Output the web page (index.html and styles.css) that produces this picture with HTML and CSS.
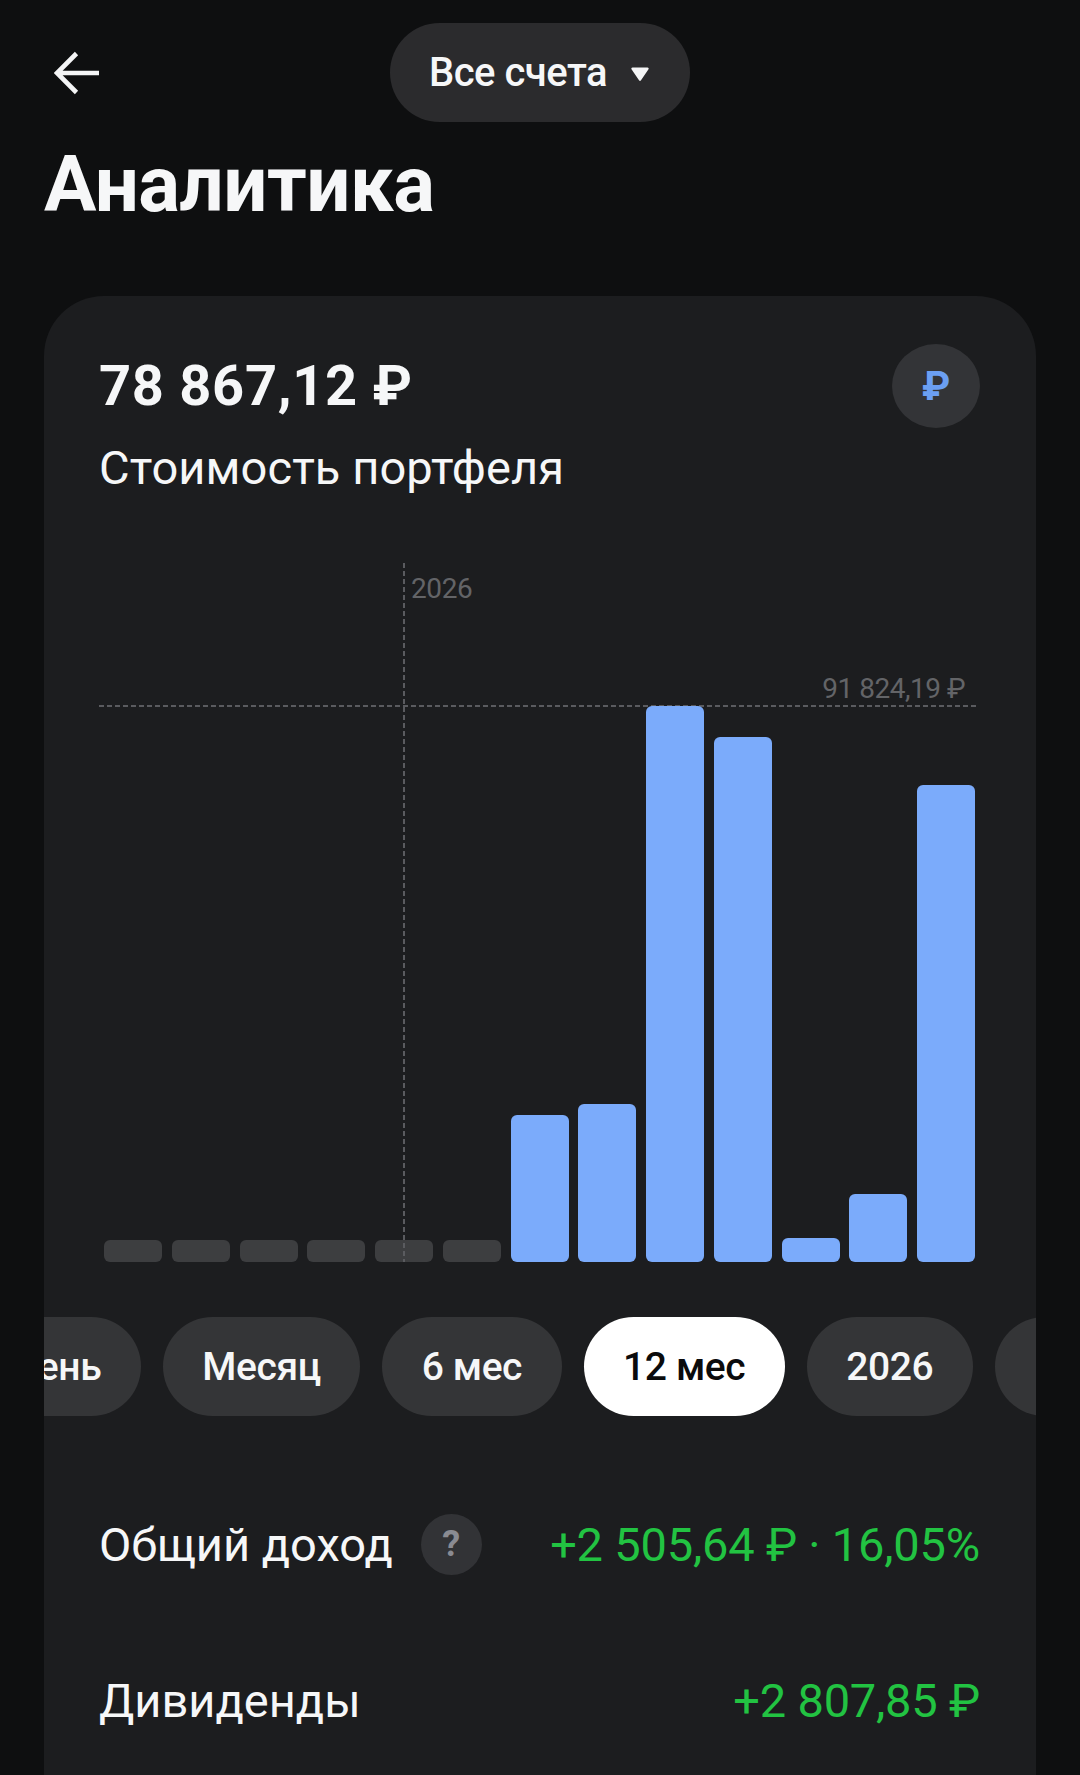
FILE: index.html
```html
<!DOCTYPE html>
<html lang="ru">
<head>
<meta charset="utf-8">
<title>Аналитика</title>
<link rel="stylesheet" href="styles.css">
</head>
<body>
<div class="page">
  <header class="topbar">
    <svg class="back" viewBox="0 0 46 44" width="46" height="44" aria-hidden="true"><path d="M45 22H3M22.500 2.500 3 22l19.500 19.500" fill="none" stroke="#f4f5f6" stroke-width="4.600"/></svg>
    <div class="account"><span>Все счета</span><svg class="caret" viewBox="0 0 20 16" width="20" height="16" aria-hidden="true"><path d="M2.500 1.500h15a1.200 1.200 0 0 1 1 1.800l-7.500 11a1.200 1.200 0 0 1-2 0l-7.500-11a1.200 1.200 0 0 1 1-1.800z" fill="#f4f5f6"/></svg></div>
  </header>
  <h1 class="title">Аналитика</h1>
  <section class="card">
    <div class="summary">
      <div>
        <div class="amount">78 867,12 ₽</div>
        <div class="caption">Стоимость портфеля</div>
      </div>
      <div class="currency">₽</div>
    </div>
    <div class="chart">
      <div class="year-line"></div>
      <div class="year-label">2026</div>
      <div class="max-line"></div>
      <div class="max-label">91 824,19 ₽</div>
      <div class="bars">
        <div class="bar empty"></div>
        <div class="bar empty"></div>
        <div class="bar empty"></div>
        <div class="bar empty"></div>
        <div class="bar empty"></div>
        <div class="bar empty"></div>
        <div class="bar" style="height:147px"></div>
        <div class="bar" style="height:158px"></div>
        <div class="bar" style="height:556px"></div>
        <div class="bar" style="height:525px"></div>
        <div class="bar" style="height:24px"></div>
        <div class="bar" style="height:68px"></div>
        <div class="bar" style="height:477px"></div>
      </div>
    </div>
    <div class="periods">
      <div class="pill">День</div>
      <div class="pill">Месяц</div>
      <div class="pill">6 мес</div>
      <div class="pill active">12 мес</div>
      <div class="pill">2026</div>
      <div class="pill">Всё время</div>
    </div>
    <div class="row row-first">
      <div class="row-label"><span>Общий доход</span><span class="help">?</span></div>
      <div class="gain">+2 505,64 ₽ · 16,05%</div>
    </div>
    <div class="row">
      <div class="row-label"><span>Дивиденды</span></div>
      <div class="gain">+2 807,85 ₽</div>
    </div>
  </section>
</div>
</body>
</html>
```

FILE: styles.css
```css
* { box-sizing: border-box; }
html, body { margin: 0; height: 1775px; overflow: hidden; background: #0e0f10; }
body { font-family: Roboto, "Noto Sans", sans-serif; color: #f6f7f8; }
.page { padding: 23px 44px 0; }
.topbar { position: relative; height: 99px; display: flex; align-items: center; justify-content: center; }
.back { position: absolute; left: 10px; top: 28px; }
.account { width: 300px; height: 99px; margin-left: -1px; border-radius: 50px; background: #2b2b2d; display: flex; align-items: center; justify-content: center; gap: 23px; font-size: 40px; font-weight: 500; letter-spacing: -0.5px; }
.caret { margin-top: 3px; }
.title { margin: 21px 0 0; font-size: 78px; line-height: 84px; font-weight: 700; letter-spacing: -0.5px; }
.card { margin-top: 69px; height: 1500px; border-radius: 60px 60px 0 0; background: #1c1d1f; padding: 48px 56px 0 55px; overflow: hidden; }
.summary { display: flex; justify-content: space-between; align-items: flex-start; }
.amount { font-size: 56px; line-height: 84px; font-weight: 700; letter-spacing: 0.7px; }
.caption { font-size: 47px; line-height: 54px; margin-top: 13px; letter-spacing: 0.1px; }
.currency { width: 88px; height: 84px; border-radius: 50%; background: #333437; color: #6b9ff2; font-size: 40px; font-weight: 700; display: flex; align-items: center; justify-content: center; }
.chart { position: relative; height: 699px; margin: 68px -6px 0 -11px; }
.year-line { position: absolute; z-index: 1; left: 315px; top: 0; bottom: 0; width: 2px; background: repeating-linear-gradient(to bottom, #5a5b5f 0 5px, transparent 5px 8px); }
.year-label { position: absolute; left: 323px; top: 9px; font-size: 28px; line-height: 34px; letter-spacing: -0.4px; color: #636467; }
.max-line { position: absolute; left: 11px; right: 10px; top: 142px; height: 2px; background: repeating-linear-gradient(to right, #5a5b5f 0 5px, transparent 5px 8px); }
.max-label { position: absolute; right: 21px; top: 109px; font-size: 28px; line-height: 34px; letter-spacing: -0.5px; color: #636467; }
.bars { position: absolute; left: 16px; right: 11px; bottom: 0; display: flex; align-items: flex-end; justify-content: space-between; }
.bar { width: 58px; background: #7babfb; border-radius: 6px; }
.bar.empty { height: 22px; background: #3d3e40; }
.periods { display: flex; gap: 22px; margin: 55px -56px 0 -129.500px; white-space: nowrap; }
.pill { flex: none; height: 99px; padding: 0 39.500px; border-radius: 50px; background: #343537; font-size: 39px; font-weight: 500; letter-spacing: -0.4px; display: flex; align-items: center; }
.pill.active { background: #fff; color: #0b0b0c; }
.row { display: flex; justify-content: space-between; align-items: center; height: 62px; font-size: 47px; margin-top: 94px; }
.row-first { margin-top: 97px; }
.row-label { display: flex; align-items: center; gap: 28px; }
.help { width: 61px; height: 61px; border-radius: 50%; background: #323336; color: #8a8b92; font-size: 36px; font-weight: 700; display: flex; align-items: center; justify-content: center; }
.gain { color: #22c342; letter-spacing: -0.2px; }
```
